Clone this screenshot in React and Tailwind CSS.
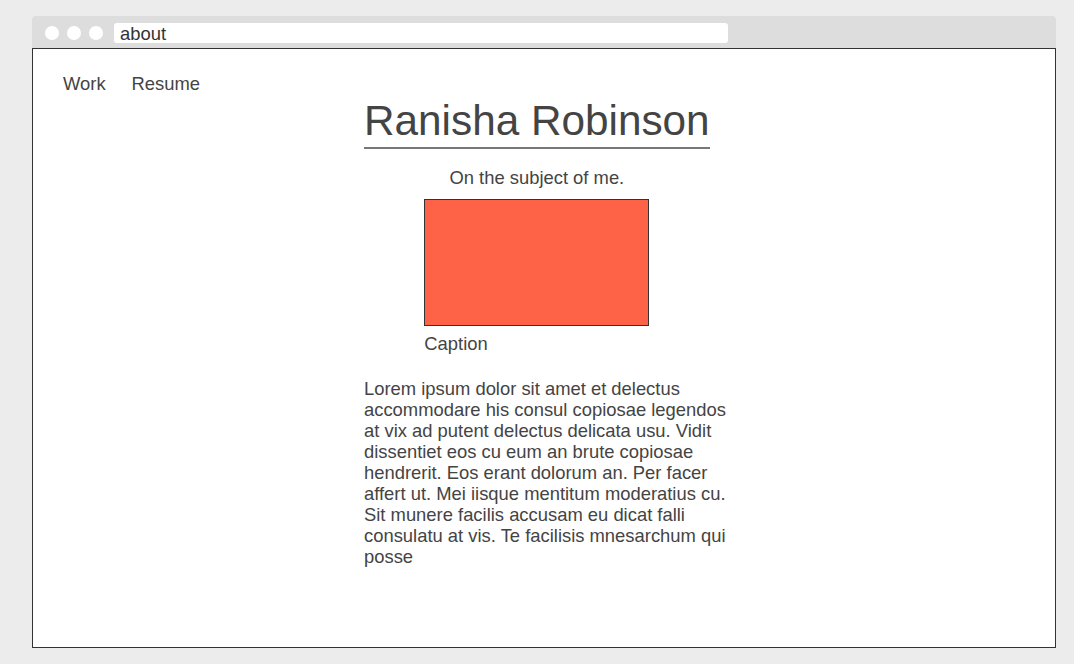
export default function App() {
  const font = { fontFamily: '"Liberation Sans", Arial, sans-serif' };
  return (
    <div className="min-h-screen w-full bg-[#ececec] pt-4 text-[#444]" style={font}>
      <div className="ml-[32px] w-[1024px]">
        <div className="flex h-8 items-start rounded-t-[4px] bg-[#dddddd] pl-[13px]">
          <div className="mt-[10px] flex gap-2">
            <span className="h-[14px] w-[14px] rounded-full bg-white" />
            <span className="h-[14px] w-[14px] rounded-full bg-white" />
            <span className="h-[14px] w-[14px] rounded-full bg-white" />
          </div>
          <div className="ml-[11px] mt-[7px] h-[20px] w-[614px] rounded-[3px] bg-white pl-[6px] text-[18.4px] leading-[21px] text-[#333]">
            about
          </div>
        </div>
        <div className="h-[600px] border border-[#333] bg-white">
          <nav className="ml-[30px] mt-[24px] flex gap-[26px] text-[18.4px] leading-[21px]">
            <span>Work</span>
            <span>Resume</span>
          </nav>
          <main className="ml-[331px] mt-[3px] w-[370px]">
            <div className="inline-flex flex-col items-center">
              <h1 className="border-b-2 border-[#777] pb-[3px] text-[42.3px] leading-[47px]">
                Ranisha Robinson
              </h1>
              <p className="mt-[18px] text-[18.4px] leading-[21px]">On the subject of me.</p>
              <figure className="mt-[11px]">
                <div className="h-[127px] w-[225px] border border-[#333] bg-[#ff6347]" />
                <figcaption className="mt-[7px] text-[18.4px] leading-[21px]">Caption</figcaption>
              </figure>
            </div>
            <p className="mt-[24px] text-[18.4px] leading-[21px]">
              Lorem ipsum dolor sit amet et delectus accommodare his consul copiosae legendos at vix ad putent delectus delicata usu. Vidit dissentiet eos cu eum an brute copiosae hendrerit. Eos erant dolorum an. Per facer affert ut. Mei iisque mentitum moderatius cu. Sit munere facilis accusam eu dicat falli consulatu at vis. Te facilisis mnesarchum qui posse
            </p>
          </main>
        </div>
      </div>
    </div>
  );
}
